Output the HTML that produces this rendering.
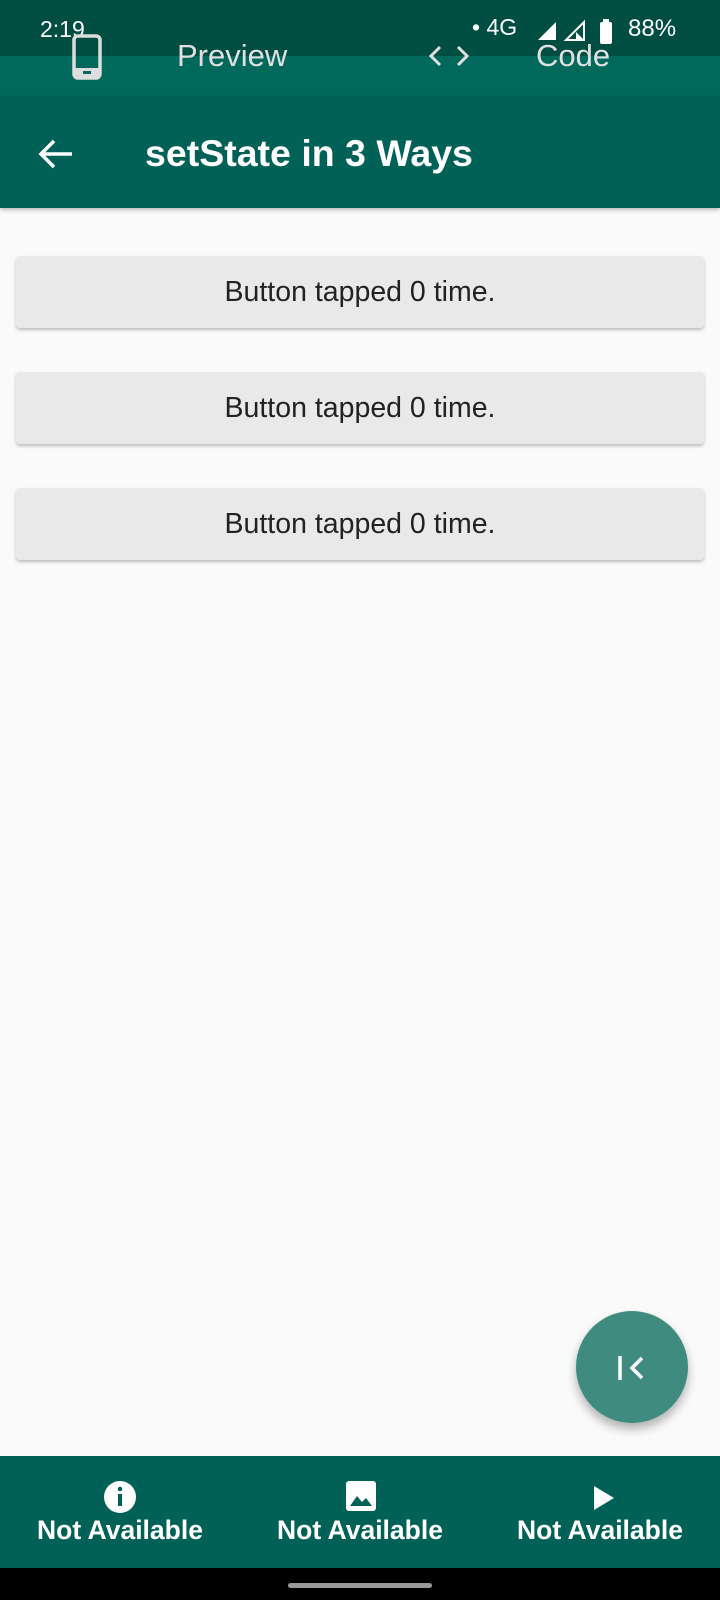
<!DOCTYPE html>
<html><head><style>
body{margin:0;width:720px;height:1600px;background:#fafafa;font-family:"Liberation Sans",sans-serif;position:relative;overflow:hidden}
.abs{position:absolute}
.btn{position:absolute;left:16px;width:688px;height:72px;background:#e9e9e9;border-radius:4px;box-shadow:0 2px 3px rgba(0,0,0,.25);display:flex;align-items:center;justify-content:center;font-size:28.5px;color:#222}
.nb{position:absolute;top:1456px;width:240px;text-align:center;color:#fff;font-weight:bold;font-size:26.5px}
</style></head><body>
<div class="abs" style="left:0;top:0;width:720px;height:56px;background:#004d42"></div>
<div class="abs" style="left:0;top:56px;width:720px;height:40px;background:#00695c"></div>
<div class="abs" style="left:0;top:96px;width:720px;height:112px;background:#016157;box-shadow:0 2px 4px rgba(0,0,0,.25)"></div>
<div class="abs" style="left:40px;top:16px;color:#fff;font-size:23px">2:19</div>
<div class="abs" style="left:472px;top:14px;color:#fff;font-size:23px">• 4G</div>
<svg class="abs" style="left:536px;top:18px" width="100" height="28"><path d="M2 22L20 4V22Z" fill="#fff"/><path d="M30 22L48 4V22Z" fill="none" stroke="#fff" stroke-width="2"/><path d="M40 14V22H48Z" fill="#fff"/><rect x="64" y="4" width="12" height="22" rx="2" fill="#fff"/><rect x="67" y="1" width="6" height="4" fill="#fff"/></svg>
<div class="abs" style="left:628px;top:15px;color:#fff;font-size:24px">88%</div>
<svg class="abs" style="left:72px;top:34px" width="32" height="46"><rect x="2" y="2" width="26" height="42" rx="4" fill="none" stroke="#ddd" stroke-width="3.5"/><rect x="2" y="34" width="26" height="10" fill="#ddd"/><rect x="11" y="37" width="8" height="3" fill="#00695c"/></svg>
<div class="abs" style="left:177px;top:38px;color:#e0e0e0;font-size:31px">Preview</div>
<svg class="abs" style="left:428px;top:44px" width="42" height="24"><path d="M12 3L3 12L12 21M30 3L39 12L30 21" fill="none" stroke="#e0e0e0" stroke-width="3"/></svg>
<div class="abs" style="left:536px;top:38px;color:#e0e0e0;font-size:31px">Code</div>
<svg class="abs" style="left:38px;top:138px" width="36" height="32"><path d="M34 16H4M16 3L3 16L16 29" fill="none" stroke="#fff" stroke-width="3.5"/></svg>
<div class="abs" style="left:145px;top:132px;color:#fff;font-size:37.5px;font-weight:bold">setState in 3 Ways</div>
<div class="btn" style="top:256px">Button tapped 0 time.</div>
<div class="btn" style="top:372px">Button tapped 0 time.</div>
<div class="btn" style="top:488px">Button tapped 0 time.</div>
<div class="abs" style="left:576px;top:1311px;width:112px;height:112px;border-radius:50%;background:#3f8b80;box-shadow:0 6px 10px rgba(0,0,0,.3)"></div>
<svg class="abs" style="left:616px;top:1352px" width="32" height="32"><path d="M4 4V28" stroke="#fff" stroke-width="3.5"/><path d="M26 6L16 16L26 26" fill="none" stroke="#fff" stroke-width="3.5"/></svg>
<div class="abs" style="left:0;top:1456px;width:720px;height:112px;background:#016157"></div>
<div class="abs" style="left:0;top:1568px;width:720px;height:32px;background:#000"></div>
<div class="abs" style="left:288px;top:1583px;width:144px;height:5px;border-radius:3px;background:#999"></div>
<svg class="abs" style="left:103px;top:1480px" width="34" height="34"><circle cx="17" cy="17" r="16" fill="#fff"/><rect x="15" y="14" width="4" height="12" fill="#016157"/><circle cx="17" cy="9" r="2.3" fill="#016157"/></svg>
<svg class="abs" style="left:345px;top:1480px" width="32" height="32"><rect x="1" y="1" width="30" height="30" rx="3" fill="#fff"/><path d="M5 26L12 16L17 22L21 18L27 26Z" fill="#016157"/></svg>
<svg class="abs" style="left:592px;top:1484px" width="24" height="28"><path d="M2 2L22 14L2 26Z" fill="#fff"/></svg>
<div class="nb" style="left:0;top:1515px">Not Available</div>
<div class="nb" style="left:240px;top:1515px">Not Available</div>
<div class="nb" style="left:480px;top:1515px">Not Available</div>
</body></html>
